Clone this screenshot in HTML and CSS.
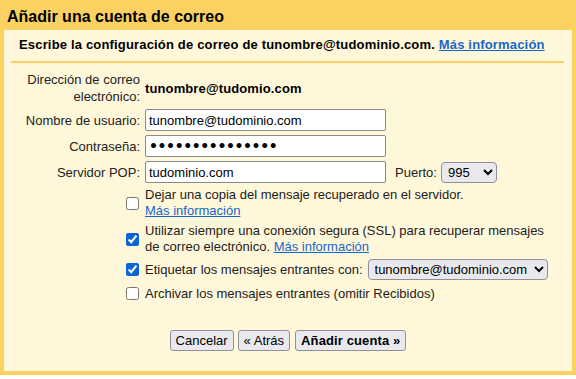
FILE: index.html
```html
<!DOCTYPE html>
<html lang="es">
<head>
<meta charset="utf-8">
<title>Añadir una cuenta de correo</title>
<link rel="stylesheet" href="styles.css">
</head>
<body>
<div class="dialog">
  <h1 class="title">Añadir una cuenta de correo</h1>
  <div class="panel">
    <p class="intro">Escribe la configuración de correo de tunombre@tudominio.com. <a href="#">Más información</a></p>
    <div class="form">
      <div class="lbl lbl-tall">Dirección de correo electrónico:</div>
      <div class="val strong">tunombre@tudomio.com</div>

      <label class="lbl" for="user">Nombre de usuario:</label>
      <div class="val"><input class="field" id="user" type="text" value="tunombre@tudominio.com"></div>

      <label class="lbl" for="pass">Contraseña:</label>
      <div class="val"><input class="field field-pass" id="pass" type="password" value="contrasena12345"></div>

      <label class="lbl" for="pop">Servidor POP:</label>
      <div class="val inline">
        <input class="field" id="pop" type="text" value="tudominio.com">
        <label class="port-label" for="port">Puerto:</label>
        <select class="sel sel-port" id="port"><option>995</option><option>110</option></select>
      </div>

      <div class="lbl chk"><input type="checkbox" id="c1"></div>
      <div class="val text"><label for="c1">Dejar una copia del mensaje recuperado en el servidor.</label><br><a href="#">Más información</a></div>

      <div class="lbl chk"><input type="checkbox" id="c2" checked></div>
      <div class="val text"><label for="c2">Utilizar siempre una conexión segura (SSL) para recuperar mensajes de correo electrónico.</label> <a href="#">Más información</a></div>

      <div class="lbl chk"><input type="checkbox" id="c3" checked></div>
      <div class="val inline text"><label for="c3">Etiquetar los mensajes entrantes con:</label>
        <select class="sel sel-label"><option>tunombre@tudominio.com</option></select>
      </div>

      <div class="lbl chk"><input type="checkbox" id="c4"></div>
      <div class="val text"><label for="c4">Archivar los mensajes entrantes (omitir Recibidos)</label></div>
    </div>
    <div class="actions">
      <button class="btn" type="button">Cancelar</button>
      <button class="btn" type="button">« Atrás</button>
      <button class="btn btn-primary" type="button">Añadir cuenta »</button>
    </div>
  </div>
</div>
</body>
</html>
```

FILE: styles.css
```css
* { box-sizing: border-box; }
html, body { margin: 0; padding: 0; background: #ffffff; }
body {
  font-family: "Liberation Sans", Arial, sans-serif;
  font-size: 13px;
  color: #000;
}
.dialog {
  width: 576px;
  background: #fbd262;
  padding: 0 4px 4px 4px;
}
.title {
  margin: 0;
  padding: 4px 3px 0;
  height: 30px;
  line-height: 26px;
  font-size: 16px;
  font-weight: bold;
  color: #000;
}
.panel {
  background: #fff7d9;
  padding: 0 0 20px 0;
}
.intro {
  margin: 0 8px 0 7px;
  padding: 7px 0 8px 8px;
  line-height: 16px;
  font-weight: bold;
  letter-spacing: 0.17px;
  border-bottom: 2px solid #fbd262;
}
a { color: #1766cc; text-decoration: underline; }
.form {
  margin: 8px 0 0 7px;
  display: grid;
  grid-template-columns: 129px 405px;
  column-gap: 5px;
  row-gap: 4px;
  align-items: center;
}
.lbl {
  text-align: right;
  line-height: 17px;
  color: #222;
}
.chk { display: flex; justify-content: flex-end; }
.chk input {
  margin: 3px 1px 3px 0;
  width: 13px;
  height: 13px;
  accent-color: #0b63d8;
}
.val { line-height: 17px; }
.strong { font-weight: bold; letter-spacing: 0.12px; }
.text { line-height: 16px; color: #222; }
.inline { display: flex; align-items: center; }
.field {
  width: 241px;
  height: 22px;
  margin: 0;
  padding: 1px 3px;
  font-family: "Liberation Sans", Arial, sans-serif;
  font-size: 13px;
  color: #000;
  background: #fff;
  border: 1px solid #8a8a8a;
  border-radius: 2px;
}
.field-pass {
  font-family: "DejaVu Sans", sans-serif;
  font-size: 14px;
  font-weight: bold;
  letter-spacing: -0.4px;
}
.port-label { margin-left: 9px; margin-right: 4px; color: #222; }
.sel {
  height: 21px;
  margin: 0;
  font-family: "Liberation Sans", Arial, sans-serif;
  font-size: 13px;
  color: #000;
  background-color: #e9e9ed;
  border: 1px solid #8f8f9d;
  border-radius: 4px;
  padding: 0 2px;
}
.sel-port { width: 56px; }
.sel-label { width: 180px; margin-left: 5px; }
.actions {
  margin-top: 27px;
  display: flex;
  justify-content: center;
  gap: 4px;
}
.btn {
  height: 21px;
  margin: 0;
  padding: 0 5px;
  font-family: "Liberation Sans", Arial, sans-serif;
  font-size: 13px;
  color: #000;
  background: #e9e9ed;
  border: 1px solid #8f8f9d;
  border-radius: 3px;
}
.btn-primary { font-weight: bold; letter-spacing: 0.12px; margin-left: 1px; }
```
